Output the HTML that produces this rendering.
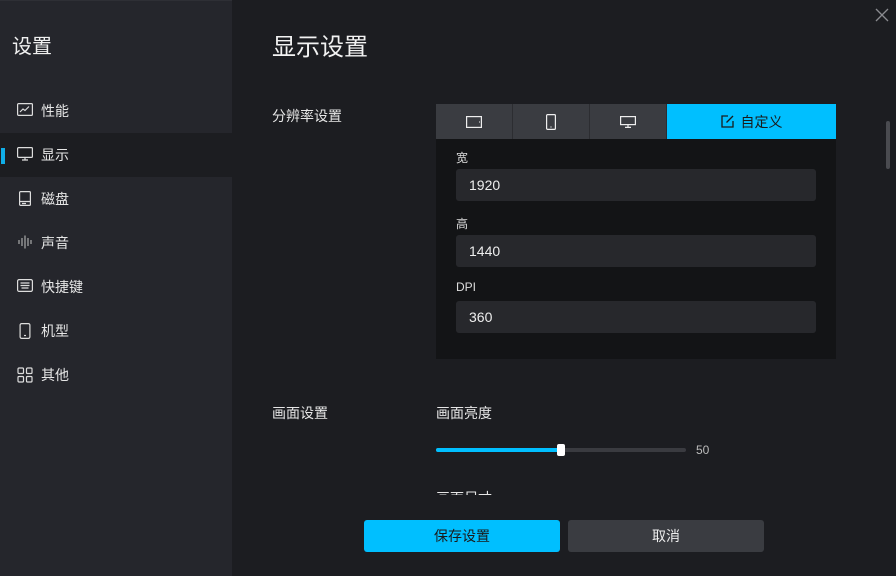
<!DOCTYPE html>
<html><head><meta charset="utf-8"><style>
*{margin:0;padding:0;box-sizing:border-box}
body{width:896px;height:576px;background:#1c1d21;font-family:"Liberation Sans","Noto Sans CJK SC",sans-serif;color:#e8e8e8;position:relative;overflow:hidden}
.side{position:absolute;left:0;top:0;width:232px;height:576px;background:#25262c;border-top:1px solid #2e2f35}
.side h1{position:absolute;left:12px;top:29px;font-size:20px;font-weight:normal;color:#f0f0f0}
.item{position:absolute;left:0;width:232px;height:44px;display:flex;align-items:center;font-size:14px;color:#e6e6e6}
.item svg{position:absolute;left:17px;top:14px}
.item span{position:absolute;left:41px;top:12px}
.item.sel{background:#1c1d21}
.item.sel:before{content:"";position:absolute;left:1px;top:15px;width:4px;height:16px;background:#10aee8}
.title{position:absolute;left:272px;top:27px;font-size:24px;color:#f2f2f2}
.lbl{position:absolute;font-size:14px;color:#e6e6e6}
.tabs{position:absolute;left:436px;top:104px;width:400px;height:35px;display:flex}
.tab{height:35px;background:#3a3c41;border-right:1px solid #2c2d31;display:flex;align-items:center;justify-content:center}
.panel{position:absolute;left:436px;top:139px;width:400px;height:220px;background:#131416}
.field{position:absolute;left:20px;width:360px;height:32px;background:#27282c;border-radius:3px;font-size:14px;padding:8px 13px;color:#eee}
.fl{position:absolute;left:20px;font-size:12px;color:#ddd}
.btn{position:absolute;top:520px;height:32px;width:196px;border-radius:3px;font-size:14px;display:flex;align-items:center;justify-content:center}
</style></head><body>
<div class="side">
<h1>设置</h1>
<div class="item" style="top:88px"><svg width="16" height="14" viewBox="0 0 16 14" fill="none" stroke="#ddd" stroke-width="1.2"><rect x="0.6" y="0.6" width="14.8" height="11.8" rx="1"/><path d="M3 9l3-3 2 1.5 4-4"/></svg><span>性能</span></div>
<div class="item sel" style="top:132px"><svg width="16" height="14" viewBox="0 0 16 14" fill="none" stroke="#ddd" stroke-width="1.2"><rect x="0.6" y="0.6" width="14.8" height="9.8" rx="1"/><path d="M8 10.5v2.5M5 13h6"/></svg><span>显示</span></div>
<div class="item" style="top:176px"><svg width="16" height="16" viewBox="0 0 16 16" fill="none" stroke="#ddd" stroke-width="1.2"><rect x="2.6" y="0.6" width="10.8" height="13.8" rx="1"/><path d="M3 10.5h10M5 12.5h4"/></svg><span>磁盘</span></div>
<div class="item" style="top:220px"><svg width="16" height="14" viewBox="0 0 16 14" fill="none" stroke="#aaa" stroke-width="1.2"><path d="M2 5v4M5 3v8M8 0.5v13M11 3v8M14 5v4"/></svg><span>声音</span></div>
<div class="item" style="top:264px"><svg width="16" height="14" viewBox="0 0 16 14" fill="none" stroke="#ddd" stroke-width="1.2"><rect x="0.6" y="0.6" width="14.8" height="11.8" rx="1.5"/><path d="M3.5 4h9M3.5 6.5h9M4.5 9h7"/></svg><span>快捷键</span></div>
<div class="item" style="top:308px"><svg width="16" height="16" viewBox="0 0 16 16" fill="none" stroke="#ddd" stroke-width="1.2"><rect x="3.1" y="0.6" width="9.8" height="14.8" rx="1.5"/><path d="M7 12.5h2"/></svg><span>机型</span></div>
<div class="item" style="top:352px"><svg width="16" height="16" viewBox="0 0 16 16" fill="none" stroke="#ddd" stroke-width="1.2"><rect x="1" y="1" width="5.5" height="5.5" rx="1"/><rect x="9.5" y="1" width="5.5" height="5.5" rx="1"/><rect x="1" y="9.5" width="5.5" height="5.5" rx="1"/><rect x="9.5" y="9.5" width="5.5" height="5.5" rx="1"/></svg><span>其他</span></div>
</div>
<svg style="position:absolute;left:875px;top:8px" width="14" height="14" viewBox="0 0 14 14" stroke="#8a8b90" stroke-width="1.3"><path d="M1 1l12 12M13 1L1 13"/></svg>
<div style="position:absolute;left:886px;top:121px;width:4px;height:48px;background:#4a4b50;border-radius:2px"></div>
<div class="title">显示设置</div>
<div class="lbl" style="left:272px;top:106px">分辨率设置</div>
<div class="tabs">
<div class="tab" style="width:77px"><svg width="16" height="12" viewBox="0 0 16 12" fill="none" stroke="#eee" stroke-width="1.2"><rect x="0.6" y="0.6" width="14.8" height="10.8"/><path d="M13 6h.8"/></svg></div>
<div class="tab" style="width:77px"><svg width="10" height="16" viewBox="0 0 10 16" fill="none" stroke="#eee" stroke-width="1.2"><rect x="0.6" y="0.6" width="8.8" height="14.8" rx="1"/><path d="M4.5 13h1"/></svg></div>
<div class="tab" style="width:77px"><svg width="16" height="12" viewBox="0 0 16 12" fill="none" stroke="#eee" stroke-width="1.2"><rect x="0.6" y="0.6" width="14.8" height="8"/><path d="M8 9v2M5 11.4h6"/></svg></div>
<div class="tab" style="width:169px;background:#00bfff;border:none;color:#1a1a1a;font-size:14px"><svg width="13" height="13" viewBox="0 0 13 13" fill="none" stroke="#1a1a1a" stroke-width="1.3" style="margin-right:7px"><path d="M7 1H1v11h11V6"/><path d="M5.5 7.5L12 1"/></svg>自定义</div>
</div>
<div class="panel">
<div class="fl" style="top:10px">宽</div>
<div class="field" style="top:30px">1920</div>
<div class="fl" style="top:76px">高</div>
<div class="field" style="top:96px">1440</div>
<div class="fl" style="top:141px">DPI</div>
<div class="field" style="top:162px">360</div>
</div>
<div class="lbl" style="left:272px;top:403px">画面设置</div>
<div class="lbl" style="left:436px;top:403px">画面亮度</div>
<div style="position:absolute;left:436px;top:448px;width:250px;height:4px;background:#3a3b40;border-radius:2px"></div>
<div style="position:absolute;left:436px;top:448px;width:125px;height:4px;background:#00bfff;border-radius:2px"></div>
<div style="position:absolute;left:557px;top:444px;width:8px;height:12px;background:#fff;border-radius:2px"></div>
<div style="position:absolute;left:696px;top:443px;font-size:12px;color:#bbb">50</div>
<div style="position:absolute;left:436px;top:488px;width:80px;height:7px;overflow:hidden"><div class="lbl" style="left:0;top:0">画面尺寸</div></div>
<div class="btn" style="left:364px;background:#00bfff;color:#1a1a1a">保存设置</div>
<div class="btn" style="left:568px;background:#3a3c41;color:#eee">取消</div>
</body></html>
